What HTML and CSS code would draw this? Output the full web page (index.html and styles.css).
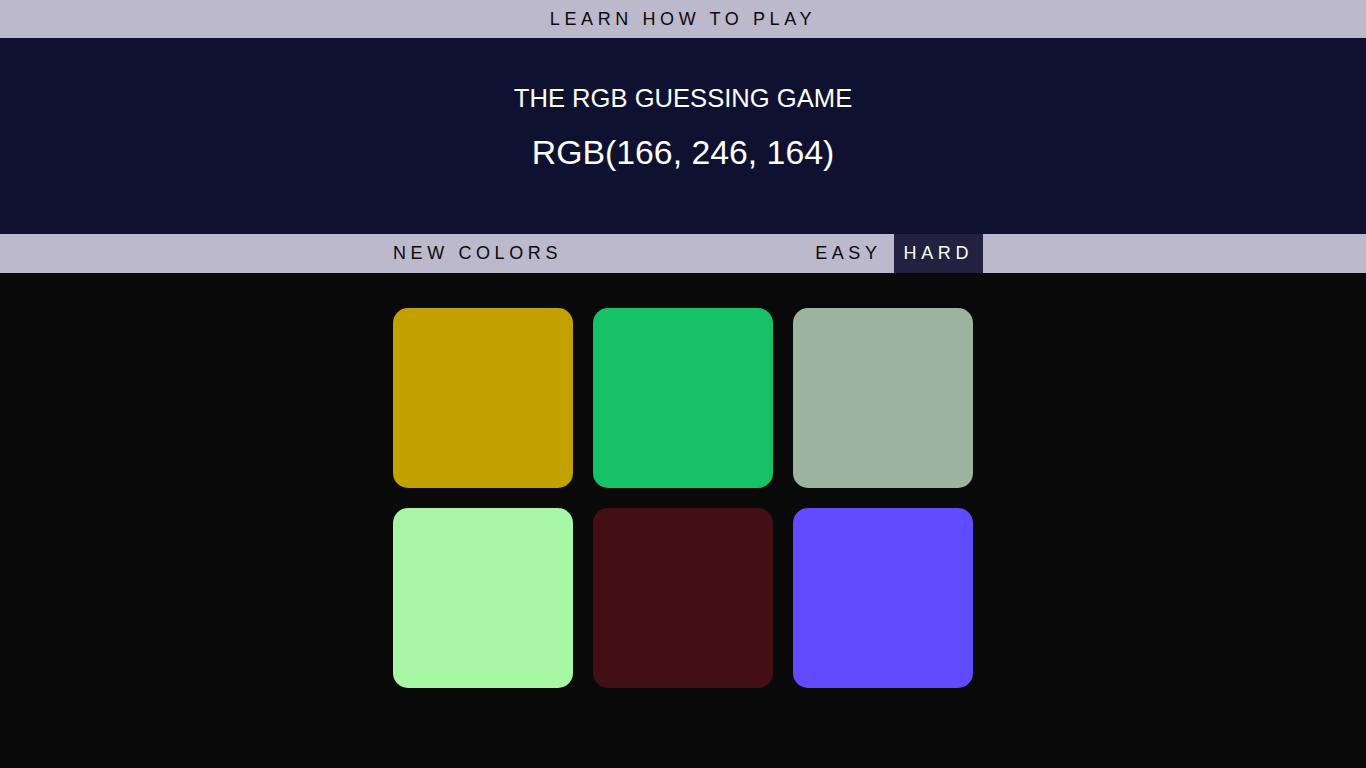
FILE: index.html
```html
<!DOCTYPE html>
<html>
<head>
<meta charset="utf-8">
<link rel="stylesheet" href="styles.css">
</head>
<body>
<div class="topbar"><span class="learn">LEARN HOW TO PLAY</span></div>
<header class="header">
  <h1 class="title">THE RGB GUESSING GAME</h1>
  <div class="rgb">RGB(166, 246, 164)</div>
</header>
<nav class="nav">
  <div class="nav-inner">
    <button class="btn new">NEW COLORS</button>
    <div class="modes">
      <button class="btn easy">EASY</button>
      <button class="btn selected">HARD</button>
    </div>
  </div>
</nav>
<main class="board">
  <div class="grid">
    <div class="square" style="background: rgb(194, 161, 0)"></div>
    <div class="square" style="background: rgb(23, 193, 104)"></div>
    <div class="square" style="background: rgb(155, 179, 159)"></div>
    <div class="square" style="background: rgb(166, 246, 164)"></div>
    <div class="square" style="background: rgb(67, 15, 21)"></div>
    <div class="square" style="background: rgb(97, 75, 255)"></div>
  </div>
</main>
</body>
</html>
```
FILE: styles.css
```css
* { box-sizing: border-box; }
html, body { margin: 0; padding: 0; }
body {
  background: #0b0a0b;
  font-family: "Liberation Sans", Arial, sans-serif;
  min-height: 768px;
}
.topbar {
  height: 38px;
  background: #bdb9cc;
  display: flex;
  align-items: center;
  justify-content: center;
}
.learn {
  font-size: 18px;
  letter-spacing: 4.6px;
  color: #0b0a0b;
}
.header {
  height: 196px;
  background: #0e1230;
  color: #ffffff;
  display: flex;
  flex-direction: column;
  align-items: center;
  padding-top: 45px;
}
.title {
  margin: 0;
  font-size: 25.6px;
  font-weight: normal;
  line-height: 30px;
}
.rgb {
  margin-top: 20px;
  font-size: 33.8px;
  line-height: 38px;
}
.nav {
  height: 39px;
  background: #bdb9cc;
  display: flex;
  justify-content: center;
}
.nav-inner {
  width: 600px;
  display: flex;
  justify-content: space-between;
  align-items: stretch;
}
.modes { display: flex; }
.btn {
  border: none;
  background: transparent;
  font-family: "Liberation Sans", Arial, sans-serif;
  font-size: 18px;
  letter-spacing: 4.6px;
  color: #0b0a0b;
  padding: 0 10px;
  height: 39px;
  cursor: pointer;
}
.btn.easy { padding-right: 12px; }
.btn.selected {
  background: #20223f;
  color: #ffffff;
}
.board {
  display: flex;
  justify-content: center;
  padding-top: 35px;
}
.grid {
  width: 580px;
  display: grid;
  grid-template-columns: repeat(3, 180px);
  gap: 20px;
}
.square {
  width: 180px;
  height: 180px;
  border-radius: 15px;
}
```
